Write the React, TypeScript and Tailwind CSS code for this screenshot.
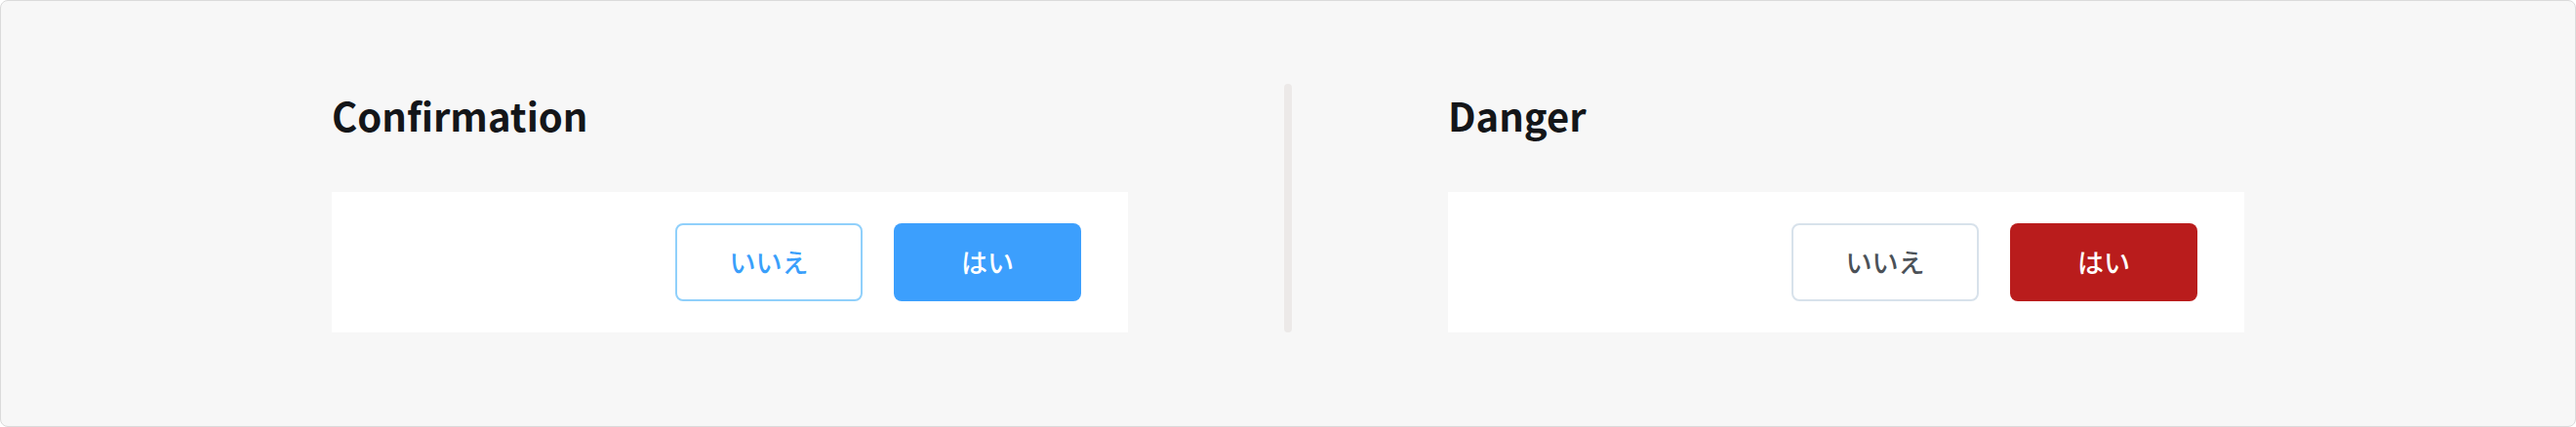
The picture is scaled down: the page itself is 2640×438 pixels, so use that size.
import React from "react";

const font = { fontFamily: '"Noto Sans CJK JP", "Noto Sans", sans-serif' };

function Section({ title, danger }: { title: string; danger?: boolean }) {
  return (
    <div className="flex w-[816px] flex-col">
      <h2 className="text-[40px] font-bold leading-[64px] text-[#141619]">{title}</h2>
      <div className="mt-[47px] flex h-[144px] items-center justify-end gap-[32px] bg-white pr-[48px]">
        {danger ? (
          <>
            <button className="flex h-[80px] w-[192px] items-center justify-center rounded-[8px] border-2 border-[#d8e2eb] bg-white text-[27px] font-medium text-[#4b5157]">
              いいえ
            </button>
            <button className="flex h-[80px] w-[192px] items-center justify-center rounded-[8px] bg-[#b91c1c] text-[27px] font-medium text-white">
              はい
            </button>
          </>
        ) : (
          <>
            <button className="flex h-[80px] w-[192px] items-center justify-center rounded-[8px] border-2 border-[#90d0fb] bg-white text-[27px] font-medium text-[#3a9ffb]">
              いいえ
            </button>
            <button className="flex h-[80px] w-[192px] items-center justify-center rounded-[8px] bg-[#3c9ffd] text-[27px] font-medium text-white">
              はい
            </button>
          </>
        )}
      </div>
    </div>
  );
}

export default function App() {
  return (
    <div style={font} className="h-[438px] w-[2640px] overflow-hidden rounded-[8px] border-[1.5px] border-[#dadada] bg-[#f7f7f7]">
      <div className="flex justify-center gap-[160px] pt-[85px]">
        <Section title="Confirmation" />
        <div className="w-[8px] self-stretch rounded-full bg-[#ece9e8]" />
        <Section title="Danger" danger />
      </div>
    </div>
  );
}
